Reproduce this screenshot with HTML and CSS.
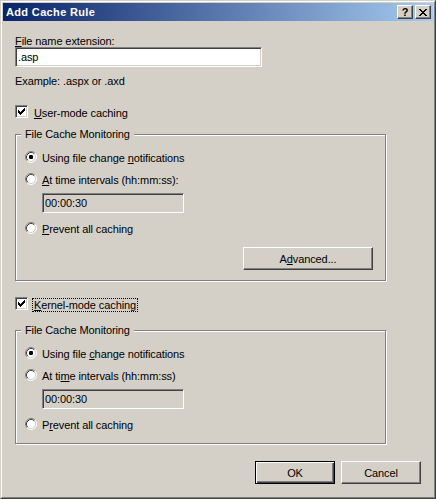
FILE: index.html
```html
<!DOCTYPE html>
<html>
<head>
<meta charset="utf-8">
<title>Add Cache Rule</title>
<link rel="stylesheet" href="styles.css">
</head>
<body>
<svg class="defs" width="0" height="0" aria-hidden="true">
  <defs>
    <symbol id="radio-base" viewBox="0 0 12 12">
      <circle cx="6" cy="6" r="5" fill="#fff"/>
      <path d="M2.11 9.89A5.5 5.5 0 0 1 9.89 2.11" fill="none" stroke="#808080"/>
      <path d="M9.89 2.11A5.5 5.5 0 0 1 2.11 9.89" fill="none" stroke="#fff"/>
      <path d="M2.82 9.18A4.5 4.5 0 0 1 9.18 2.82" fill="none" stroke="#404040"/>
      <path d="M9.18 2.82A4.5 4.5 0 0 1 2.82 9.18" fill="none" stroke="#D4D0C8"/>
    </symbol>
    <symbol id="radio-on" viewBox="0 0 12 12">
      <use href="#radio-base"/>
      <rect x="4" y="4" width="4" height="4" rx="1.2" fill="#000"/>
    </symbol>
    <symbol id="check" viewBox="0 0 7 7">
      <path d="M6 0h1v1h-1z M5 1h2v1h-2z M0 2h1v1h-1z M4 2h3v1h-3z M0 3h2v1h-2z M3 3h3v1h-3z M0 4h5v1h-5z M1 5h3v1h-3z M2 6h1v1h-1z" fill="#000"/>
    </symbol>
  </defs>
</svg>
<div class="window">
  <div class="frame">
    <div class="titlebar">
      <span class="title">Add Cache Rule</span>
      <span class="tbtn help">?</span>
      <span class="tbtn close">
        <svg width="8" height="7" viewBox="0 0 8 7" shape-rendering="crispEdges"><path d="M0 0h2v1h-2z M6 0h2v1h-2z M1 1h2v1h-2z M5 1h2v1h-2z M2 2h4v1h-4z M3 3h2v1h-2z M2 4h4v1h-4z M1 5h2v1h-2z M5 5h2v1h-2z M0 6h2v1h-2z M6 6h2v1h-2z" fill="#000"/></svg>
      </span>
    </div>
    <div class="client">
      <div class="lbl"><u>F</u>ile name extension:</div>
      <div class="edit ext">.asp</div>
      <div class="hint">Example: .aspx or .axd</div>

      <div class="check-row first">
        <span class="checkbox"><svg width="7" height="7" shape-rendering="crispEdges"><use href="#check"/></svg></span>
        <span class="check-label"><u>U</u>ser-mode caching</span>
      </div>

      <div class="group first-group">
        <span class="group-title">File Cache Monitoring</span>
        <div class="radio-row r1">
          <svg class="radio" width="12" height="12"><use href="#radio-on"/></svg>
          <span class="radio-label">Using file change <u>n</u>otifications</span>
        </div>
        <div class="radio-row">
          <svg class="radio" width="12" height="12"><use href="#radio-base"/></svg>
          <span class="radio-label"><u>A</u>t time intervals (hh:mm:ss):</span>
        </div>
        <div class="edit time">00:00:30</div>
        <div class="radio-row">
          <svg class="radio" width="12" height="12"><use href="#radio-base"/></svg>
          <span class="radio-label"><u>P</u>revent all caching</span>
        </div>
        <div class="btn adv">A<u>d</u>vanced...</div>
      </div>

      <div class="check-row second">
        <span class="checkbox"><svg width="7" height="7" shape-rendering="crispEdges"><use href="#check"/></svg></span>
        <span class="check-label focus"><u>K</u>ernel-mode caching</span>
      </div>

      <div class="group second-group">
        <span class="group-title">File Cache Monitoring</span>
        <div class="radio-row r1">
          <svg class="radio" width="12" height="12"><use href="#radio-on"/></svg>
          <span class="radio-label">Using file <u>c</u>hange notifications</span>
        </div>
        <div class="radio-row">
          <svg class="radio" width="12" height="12"><use href="#radio-base"/></svg>
          <span class="radio-label">At ti<u>m</u>e intervals (hh:mm:ss)</span>
        </div>
        <div class="edit time">00:00:30</div>
        <div class="radio-row">
          <svg class="radio" width="12" height="12"><use href="#radio-base"/></svg>
          <span class="radio-label">P<u>r</u>event all caching</span>
        </div>
      </div>

      <div class="buttons">
        <div class="btn default">OK</div>
        <div class="btn">Cancel</div>
      </div>
    </div>
  </div>
</div>
</body>
</html>
```
FILE: styles.css
```css
* { box-sizing: border-box; }
html, body { margin: 0; padding: 0; }
body {
  width: 436px;
  height: 499px;
  overflow: hidden;
  background: #D4D0C8;
  color: #000;
  font-family: "Liberation Sans", Arial, sans-serif;
  font-size: 11px;
  line-height: 12px;
  letter-spacing: -0.1px;
}
.defs { position: absolute; width: 0; height: 0; overflow: hidden; }
u { text-decoration: underline; text-underline-offset: 1px; }

.window {
  width: 436px;
  height: 499px;
  border: 1px solid;
  border-color: #D4D0C8 #404040 #404040 #D4D0C8;
}
.frame {
  height: 100%;
  border: 1px solid;
  border-color: #fff #808080 #808080 #fff;
  padding: 1px;
  display: flex;
  flex-direction: column;
}
.titlebar {
  flex: none;
  height: 18px;
  display: flex;
  align-items: center;
  padding: 0 2px 0 3px;
  background: linear-gradient(to right, #0A246A, #A6CAF0);
}
.title {
  flex: 1;
  color: #fff;
  font-weight: bold;
  line-height: 18px;
  letter-spacing: 0.35px;
}
.tbtn {
  width: 16px;
  height: 14px;
  margin-left: 2px;
  display: flex;
  align-items: center;
  justify-content: center;
  background: #D4D0C8;
  border: 1px solid;
  border-color: #fff #404040 #404040 #fff;
  box-shadow: inset -1px -1px #808080;
  font-weight: bold;
  font-size: 11px;
  line-height: 12px;
  letter-spacing: 0;
}

.client {
  flex: 1;
  display: flex;
  flex-direction: column;
  align-items: flex-start;
  padding: 0 12px;
}
.lbl { margin-top: 14px; }
.edit {
  height: 20px;
  border: 1px solid;
  border-color: #808080 #fff #fff #808080;
  box-shadow: inset 1px 1px #404040, inset -1px -1px #D4D0C8;
  background: #fff;
  padding: 0 2px;
  line-height: 18px;
  white-space: nowrap;
}
.ext { width: 247px; }
.hint { margin-top: 8px; }

.check-row {
  display: flex;
  align-items: flex-start;
}
.check-row.first { margin-top: 18px; }
.check-row.second { margin-top: 16px; }
.checkbox {
  flex: none;
  width: 13px;
  height: 13px;
  padding: 2px;
  border: 1px solid;
  border-color: #808080 #fff #fff #808080;
  box-shadow: inset 1px 1px #404040, inset -1px -1px #D4D0C8;
  background: #fff;
  display: flex;
}
.checkbox svg { display: block; }
.check-label {
  margin: 1px 0 0 4px;
  padding: 0 1px;
  border: 1px dotted transparent;
  line-height: 12px;
}
.check-label.focus { border-color: #000; }

.group {
  width: 371px;
  border: 1px solid #808080;
  box-shadow: 1px 1px 0 #fff, inset 1px 1px 0 #fff;
  display: flex;
  flex-direction: column;
  align-items: flex-start;
}
.first-group { margin-top: 14px; padding-bottom: 10px; }
.second-group { margin-top: 18px; padding-bottom: 12px; }
.group-title {
  margin: -7px 0 0 5px;
  padding: 0 4px;
  background: #D4D0C8;
  line-height: 12px;
}
.radio-row {
  display: flex;
  align-items: flex-start;
  margin: 9px 0 0 9px;
}
.radio-row.r1 { margin-top: 11px; }
.radio { flex: none; display: block; }
.radio-label {
  margin-left: 5px;
  padding-top: 1px;
  line-height: 12px;
}
.time {
  width: 142px;
  margin: 7px 0 0 26px;
  background: #D4D0C8;
}

.btn {
  width: 80px;
  height: 23px;
  display: flex;
  align-items: center;
  justify-content: center;
  background: #D4D0C8;
  border: 1px solid;
  border-color: #fff #404040 #404040 #fff;
  box-shadow: inset -1px -1px #808080;
  line-height: 12px;
}
.btn.adv {
  width: 130px;
  align-self: flex-end;
  margin: 12px 12px 0 0;
}
.btn.default {
  border-color: #000;
  box-shadow: inset 1px 1px #fff, inset -1px -1px #404040, inset -2px -2px #808080;
}
.buttons {
  align-self: stretch;
  display: flex;
  justify-content: flex-end;
  gap: 6px;
  margin-top: 17px;
}
```
